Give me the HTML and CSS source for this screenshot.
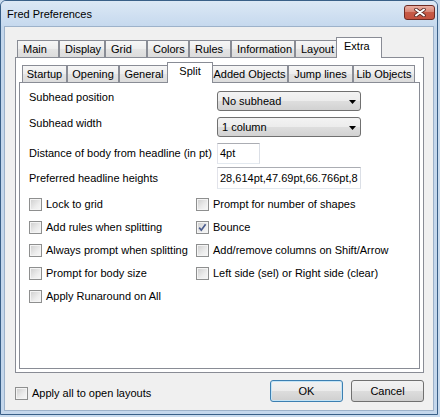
FILE: index.html
```html
<!DOCTYPE html>
<html>
<head>
<meta charset="utf-8">
<link rel="stylesheet" href="styles.css">
</head>
<body>
<div class="window">
  <div class="titlebar">
    <span class="title">Fred Preferences</span>
    <div class="close">
      <svg width="12" height="9" viewBox="0 0 12 9"><path d="M2 1.5 L10 7.5 M10 1.5 L2 7.5" stroke="#5a2a26" stroke-width="3.6" stroke-linecap="round"/><path d="M2 1.5 L10 7.5 M10 1.5 L2 7.5" stroke="#fff" stroke-width="2" stroke-linecap="round"/></svg>
    </div>
  </div>
  <div class="client">
    <div class="tabctl outer">
      <div class="strip">
        <div class="tab w-main">Main</div>
        <div class="tab w-display">Display</div>
        <div class="tab w-grid">Grid</div>
        <div class="tab w-colors">Colors</div>
        <div class="tab w-rules">Rules</div>
        <div class="tab w-info">Information</div>
        <div class="tab w-layout">Layout</div>
        <div class="tab sel w-extra">Extra</div>
      </div>
      <div class="panel outer-panel">
        <div class="tabctl inner">
          <div class="strip">
            <div class="tab w-startup">Startup</div>
            <div class="tab w-opening">Opening</div>
            <div class="tab w-general">General</div>
            <div class="tab sel w-split">Split</div>
            <div class="tab w-added">Added Objects</div>
            <div class="tab w-jump">Jump lines</div>
            <div class="tab w-lib">Lib Objects</div>
          </div>
          <div class="panel inner-panel">
            <div class="row row-top">
              <span class="lbl">Subhead position</span>
              <div class="combo"><span>No subhead</span><svg width="7" height="4" viewBox="0 0 7 4"><path d="M0 0 H7 L3.5 4 Z" fill="#000"/></svg></div>
            </div>
            <div class="row row-top r2">
              <span class="lbl">Subhead width</span>
              <div class="combo"><span>1 column</span><svg width="7" height="4" viewBox="0 0 7 4"><path d="M0 0 H7 L3.5 4 Z" fill="#000"/></svg></div>
            </div>
            <div class="row r3">
              <span class="lbl">Distance of body from headline (in pt)</span>
              <div class="text short">4pt</div>
            </div>
            <div class="row r4">
              <span class="lbl">Preferred headline heights</span>
              <div class="text long">28,614pt,47.69pt,66.766pt,8</div>
            </div>
            <div class="checks">
              <div class="check"><span class="box"></span>Lock to grid</div>
              <div class="check"><span class="box"></span>Prompt for number of shapes</div>
              <div class="check"><span class="box"></span>Add rules when splitting</div>
              <div class="check"><span class="box on"><svg width="11" height="11" viewBox="0 0 11 11"><path d="M2.2 5.6 L4.3 8.2 L8.6 2.2" fill="none" stroke="#4a5c8e" stroke-width="1.7"/></svg></span>Bounce</div>
              <div class="check"><span class="box"></span>Always prompt when splitting</div>
              <div class="check"><span class="box"></span>Add/remove columns on Shift/Arrow</div>
              <div class="check"><span class="box"></span>Prompt for body size</div>
              <div class="check"><span class="box"></span>Left side (sel) or Right side (clear)</div>
              <div class="check"><span class="box"></span>Apply Runaround on All</div>
            </div>
          </div>
        </div>
      </div>
    </div>
    <div class="bottom">
      <div class="check"><span class="box"></span>Apply all to open layouts</div>
      <div class="buttons">
        <button class="btn default">OK</button>
        <button class="btn">Cancel</button>
      </div>
    </div>
  </div>
</div>
</body>
</html>
```

FILE: styles.css
```css
* { box-sizing: border-box; }

body {
  margin: 0;
  background: #c9dbee;
  font-family: "Liberation Sans", Arial, sans-serif;
  font-size: 11px;
  color: #000;
}

.window {
  width: 438px;
  height: 415px;
  border: 1px solid #3a6088;
  border-radius: 6px 6px 0 0;
  background: #c4d7ec;
  display: flex;
  flex-direction: column;
}

.titlebar {
  height: 25px;
  flex: none;
  display: flex;
  justify-content: space-between;
  align-items: flex-start;
  background: linear-gradient(#dce8f5, #c6d9ee);
  border-radius: 5px 5px 0 0;
}

.title {
  padding-left: 6px;
  margin-top: 7px;
  line-height: 13px;
}

.close {
  width: 31px;
  height: 15px;
  margin: 4px 2px 0 0;
  border: 1px solid #6e2b24;
  border-radius: 3px;
  background: linear-gradient(#eab0a4, #d98676 45%, #c65a47 50%, #c45240);
  display: flex;
  align-items: center;
  justify-content: center;
}

.client {
  flex: 1;
  margin: 0 3px 3px;
  background: #f0f0f0;
  border: 1px solid #9db2ca;
  padding: 10px 0 0 10px;
}

.tabctl.outer { width: 409px; }

.strip {
  display: flex;
  align-items: flex-end;
  height: 20px;
  padding-left: 2px;
}

.tab {
  flex: none;
  height: 17px;
  border: 1px solid #898c95;
  border-bottom: none;
  background: linear-gradient(#f6f6f6, #ededed 50%, #e4e4e4 50%, #dcdcdc);
  line-height: 16px;
  padding-left: 5px;
  white-space: nowrap;
  overflow: hidden;
}

.tab.sel {
  height: 21px;
  margin: 0 -2px -1px;
  background: #fff;
  position: relative;
  z-index: 1;
  padding-left: 7px;
}

.w-main { width: 42px; }
.w-display { width: 46px; }
.w-grid { width: 42px; }
.w-colors { width: 42px; }
.w-rules { width: 42px; }
.w-info { width: 64px; }
.w-layout { width: 43px; }
.w-extra { width: 46px; }

.inner .strip { padding-left: 3px; }
.inner .tab { padding-left: 0; text-align: center; }
.w-startup { width: 45px; }
.w-opening { width: 52px; }
.w-general { width: 50px; }
.w-split { width: 46px; }
.w-added { width: 77px; }
.w-jump { width: 65px; }
.w-lib { width: 62px; }

.panel {
  border: 1px solid #898c95;
  background: #fff;
}

.outer-panel {
  height: 316px;
  padding: 4px 3px 3px;
}

.inner-panel {
  height: 287px;
  padding: 8px 0 0 9px;
}

.row {
  display: flex;
  align-items: center;
}

.row-top { align-items: flex-start; }
.r2 { margin-top: 6px; }
.r3 { margin-top: 6px; }
.r4 { margin-top: 3px; }

.lbl {
  width: 188px;
  flex: none;
  line-height: 13px;
  white-space: nowrap;
}

.combo {
  width: 144px;
  height: 20px;
  border: 1px solid #707070;
  border-radius: 3px;
  background: linear-gradient(#f3f3f3, #ececec 50%, #dedede 50%, #d2d2d2);
  display: flex;
  align-items: center;
  justify-content: space-between;
  padding: 0 4px 0 4px;
}

.combo svg { margin-top: 1px; }

.text {
  border: 1px solid;
  border-color: #abadb3 #dbdfe6 #e3e9ef #e2e3ea;
  background: #fff;
  padding-left: 2px;
  white-space: nowrap;
  overflow: hidden;
}

.text.short { width: 43px; height: 21px; line-height: 19px; }
.text.long { width: 144px; height: 22px; line-height: 20px; }

.checks {
  margin-top: 4px;
  display: grid;
  grid-template-columns: 167px 1fr;
  grid-auto-rows: 23px;
  align-items: center;
}

.check {
  display: flex;
  align-items: center;
  gap: 4px;
  line-height: 13px;
  white-space: nowrap;
}

.box {
  flex: none;
  width: 13px;
  height: 13px;
  border: 1px solid #8e8f8f;
  background: linear-gradient(135deg, #cdcdcd, #ececec 60%, #f8f8f8);
  box-shadow: inset 0 0 0 1px #f4f4f4;
  display: flex;
}

.bottom {
  width: 409px;
  display: flex;
  justify-content: space-between;
  align-items: flex-start;
  padding-top: 7px;
}

.bottom .check { margin-top: 7px; }

.buttons {
  display: flex;
  gap: 8px;
}

.btn {
  width: 73px;
  height: 22px;
  padding: 0;
  border: 1px solid #707070;
  border-radius: 3px;
  background: linear-gradient(#f2f2f2, #ebebeb 50%, #dddddd 50%, #cfcfcf);
  font: inherit;
  color: #000;
}

.btn.default {
  border-color: #3c7fb1;
  box-shadow: inset 0 0 0 1px #c4e4f6;
}
```
